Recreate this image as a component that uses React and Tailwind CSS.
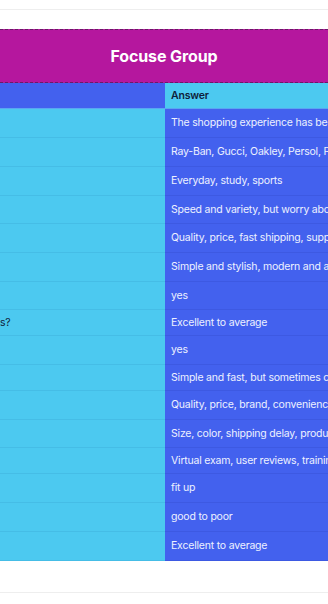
import React, { useLayoutEffect, useRef } from "react";

const rows = [
  { q: "How was your shopping experience?", a: "The shopping experience has been smooth and enjoyable", h: "h-[29px]" },
  { q: "Which eyewear brands do you know?", a: "Ray-Ban, Gucci, Oakley, Persol, Prada, Tom Ford", h: "h-[29px]" },
  { q: "When do you usually wear glasses?", a: "Everyday, study, sports", h: "h-[29px]" },
  { q: "What do you think of online shopping?", a: "Speed and variety, but worry about the fit", h: "h-[28px]" },
  { q: "What matters most when you buy?", a: "Quality, price, fast shipping, support", h: "h-[29px]" },
  { q: "How would you describe the design?", a: "Simple and stylish, modern and attractive", h: "h-[29px]" },
  { q: "Would you recommend the store?", a: "yes", h: "h-[28px]" },
  { q: "How would you rate the quality of products?", a: "Excellent to average", h: "h-[26px]" },
  { q: "Would you buy from us again?", a: "yes", h: "h-[29px]" },
  { q: "How was the checkout process?", a: "Simple and fast, but sometimes confusing", h: "h-[26px]" },
  { q: "What influences your choice?", a: "Quality, price, brand, convenience", h: "h-[29px]" },
  { q: "What problems have you had?", a: "Size, color, shipping delay, product quality", h: "h-[28px]" },
  { q: "Which features would help you?", a: "Virtual exam, user reviews, training videos", h: "h-[26px]" },
  { q: "How do the frames fit?", a: "fit up", h: "h-[29px]" },
  { q: "How was customer service?", a: "good to poor", h: "h-[29px]" },
  { q: "How do you rate the packaging?", a: "Excellent to average", h: "h-[29px]" },
];

export default function App() {
  const scroller = useRef(null);

  // The table opens scrolled to the answers column
  useLayoutEffect(() => {
    if (scroller.current) scroller.current.scrollLeft = 206;
  }, []);

  return (
    <div className="w-[328px] h-[604px] bg-white overflow-hidden" style={{ fontFamily: "Inter, 'Noto Sans', sans-serif" }}>
      <div className="h-[10px] border-b border-[#eeeeee]" />
      <div className="h-[19px]" />
      <div className="h-[54px] bg-[#b5179e] border-y border-dashed border-[#6a1b66] flex items-center justify-center">
        <h1 className="text-white text-[16px] font-bold tracking-[-0.1px]">Focuse Group</h1>
      </div>
      <div ref={scroller} className="overflow-hidden">
        <div className="w-[900px] text-[10.5px] tracking-[-0.2px]">
          <div className="flex h-[26px] border-b border-[#5aa6f2]">
            <div className="w-[371px] shrink-0 bg-[#4361ee] px-1.5 flex items-center font-semibold text-[#0f1d3a]">Question</div>
            <div className="flex-1 bg-[#4cc9f0] px-1.5 flex items-center font-semibold text-[#0f1d3a]">Answer</div>
          </div>
          {rows.map((r, i) => (
            <div key={i} className={`flex ${r.h}`}>
              <div className="w-[371px] shrink-0 bg-[#4cc9f0] border-b border-[#45bde6] px-1.5 flex items-center text-[#10243a] whitespace-nowrap">
                {r.q}
              </div>
              <div className="flex-1 bg-[#4361ee] border-b border-[#3d59e2] px-1.5 flex items-center text-[#eef1ff] whitespace-nowrap">
                {r.a}
              </div>
            </div>
          ))}
        </div>
      </div>
      <div className="h-[32px] border-b border-[#eeeeee]" />
    </div>
  );
}
